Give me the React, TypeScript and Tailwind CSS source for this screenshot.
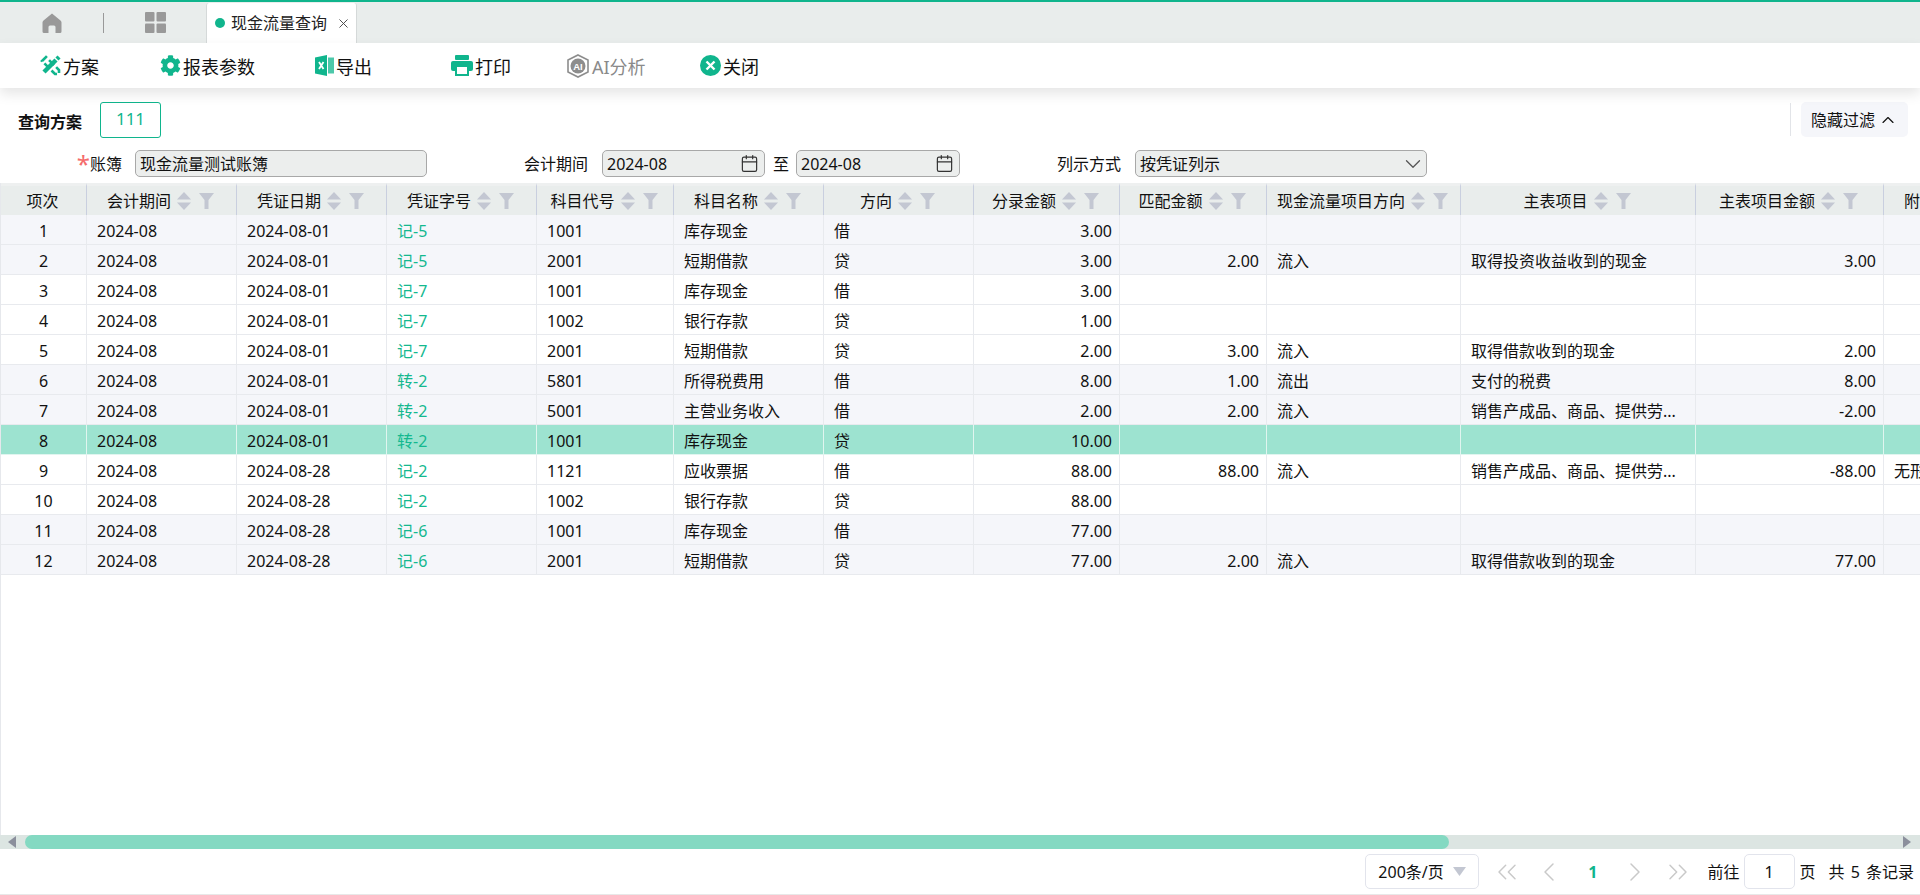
import { Calendar, ChevronDown, ChevronLeft, ChevronRight, ChevronUp, ChevronsLeft, ChevronsRight, X } from "lucide-react";
import { FaCog } from "react-icons/fa";

const columns = [
  { title: "项次", width: "w-[86px]", plain: true },
  { title: "会计期间", width: "w-[150px]" },
  { title: "凭证日期", width: "w-[150px]" },
  { title: "凭证字号", width: "w-[150px]" },
  { title: "科目代号", width: "w-[137px]" },
  { title: "科目名称", width: "w-[150px]" },
  { title: "方向", width: "w-[150px]" },
  { title: "分录金额", width: "w-[146px]" },
  { title: "匹配金额", width: "w-[147px]" },
  { title: "现金流量项目方向", width: "w-[194px]" },
  { title: "主表项目", width: "w-[235px]" },
  { title: "主表项目金额", width: "w-[188px]" },
  { title: "附表项目", width: "w-[150px]" },
];

const rows = [
  { no: 1, date: "2024-08-01", voucher: "记-5", code: "1001", name: "库存现金", dir: "借", amount: "3.00", match: "", flow: "", item: "", itemAmount: "", extra: "", shade: true },
  { no: 2, date: "2024-08-01", voucher: "记-5", code: "2001", name: "短期借款", dir: "贷", amount: "3.00", match: "2.00", flow: "流入", item: "取得投资收益收到的现金", itemAmount: "3.00", extra: "", shade: true },
  { no: 3, date: "2024-08-01", voucher: "记-7", code: "1001", name: "库存现金", dir: "借", amount: "3.00", match: "", flow: "", item: "", itemAmount: "", extra: "", shade: false },
  { no: 4, date: "2024-08-01", voucher: "记-7", code: "1002", name: "银行存款", dir: "贷", amount: "1.00", match: "", flow: "", item: "", itemAmount: "", extra: "", shade: false },
  { no: 5, date: "2024-08-01", voucher: "记-7", code: "2001", name: "短期借款", dir: "贷", amount: "2.00", match: "3.00", flow: "流入", item: "取得借款收到的现金", itemAmount: "2.00", extra: "", shade: false },
  { no: 6, date: "2024-08-01", voucher: "转-2", code: "5801", name: "所得税费用", dir: "借", amount: "8.00", match: "1.00", flow: "流出", item: "支付的税费", itemAmount: "8.00", extra: "", shade: true },
  { no: 7, date: "2024-08-01", voucher: "转-2", code: "5001", name: "主营业务收入", dir: "借", amount: "2.00", match: "2.00", flow: "流入", item: "销售产成品、商品、提供劳...", itemAmount: "-2.00", extra: "", shade: true },
  { no: 8, date: "2024-08-01", voucher: "转-2", code: "1001", name: "库存现金", dir: "贷", amount: "10.00", match: "", flow: "", item: "", itemAmount: "", extra: "", shade: true, active: true },
  { no: 9, date: "2024-08-28", voucher: "记-2", code: "1121", name: "应收票据", dir: "借", amount: "88.00", match: "88.00", flow: "流入", item: "销售产成品、商品、提供劳...", itemAmount: "-88.00", extra: "无形资产", shade: false },
  { no: 10, date: "2024-08-28", voucher: "记-2", code: "1002", name: "银行存款", dir: "贷", amount: "88.00", match: "", flow: "", item: "", itemAmount: "", extra: "", shade: false },
  { no: 11, date: "2024-08-28", voucher: "记-6", code: "1001", name: "库存现金", dir: "借", amount: "77.00", match: "", flow: "", item: "", itemAmount: "", extra: "", shade: true },
  { no: 12, date: "2024-08-28", voucher: "记-6", code: "2001", name: "短期借款", dir: "贷", amount: "77.00", match: "2.00", flow: "流入", item: "取得借款收到的现金", itemAmount: "77.00", extra: "", shade: true },
];

function HomeIcon() {
  return (
    <svg width="20" height="20" viewBox="0 0 20 20" fill="#999">
      <path d="M10 0.5 L18.5 7.5 Q19.5 8.3 19.5 9.5 V18.5 Q19.5 20 18 20 H13.5 V14 Q13.5 12.5 12 12.5 H8 Q6.5 12.5 6.5 14 V20 H2 Q0.5 20 0.5 18.5 V9.5 Q0.5 8.3 1.5 7.5 Z" />
    </svg>
  );
}

function GridIcon() {
  return (
    <svg width="21" height="21" viewBox="0 0 21 21" fill="#999">
      <rect x="0" y="0" width="9.5" height="9.5" rx="1" />
      <rect x="11.5" y="0" width="9.5" height="9.5" rx="1" />
      <rect x="0" y="11.5" width="9.5" height="9.5" rx="1" />
      <rect x="11.5" y="11.5" width="9.5" height="9.5" rx="1" />
    </svg>
  );
}

function PlanIcon() {
  return (
    <svg width="21" height="21" viewBox="0 0 21 21" fill="none" stroke="#10b58d">
      <path d="M2 6 L6 2 L19 15 L19 19 L15 19 Z" strokeWidth="2.6" strokeDasharray="7 3" />
      <path d="M4 17 L16 5" strokeWidth="4.5" />
      <path d="M16.5 1.5 L19.5 4.5" strokeWidth="3" />
    </svg>
  );
}

function ExcelIcon() {
  return (
    <svg width="19" height="21" viewBox="0 0 19 21">
      <path d="M0 2.5 L12 0 V21 L0 18.5 Z" fill="#10b58d" />
      <path d="M13 2.5 H19 V18.5 H13 Z" fill="#10b58d" opacity="0.75" />
      <path d="M4 7 L8.5 14 M8.5 7 L4 14" stroke="#fff" strokeWidth="1.8" />
    </svg>
  );
}

function PrintIcon() {
  return (
    <svg width="22" height="21" viewBox="0 0 22 21" fill="#10b58d">
      <rect x="4" y="0" width="14" height="5" rx="1" />
      <rect x="0" y="6" width="22" height="10" rx="2" />
      <rect x="5" y="11" width="12" height="9" fill="#fff" stroke="#10b58d" strokeWidth="2" />
    </svg>
  );
}

function AiIcon() {
  return (
    <svg width="24" height="24" viewBox="0 0 24 24" fill="none">
      <path d="M12 1 L22 6 V18 L12 23 L2 18 V6 Z" stroke="#8d8d8d" strokeWidth="1.6" />
      <circle cx="12" cy="12" r="7.5" fill="#8d8d8d" />
      <text x="12" y="15.5" textAnchor="middle" fontSize="9.5" fontWeight="700" fill="#fff" fontFamily="Liberation Sans, sans-serif">AI</text>
    </svg>
  );
}

function CloseIcon() {
  return (
    <svg width="21" height="21" viewBox="0 0 21 21">
      <circle cx="10.5" cy="10.5" r="10.5" fill="#10b58d" />
      <path d="M6.5 6.5 L14.5 14.5 M14.5 6.5 L6.5 14.5" stroke="#fff" strokeWidth="2.4" />
    </svg>
  );
}

function SortIcon() {
  return (
    <svg width="14" height="18" viewBox="0 0 14 18" fill="#c3c7d2">
      <path d="M7 0 L14 7.5 H0 Z" />
      <path d="M0 10.5 H14 L7 18 Z" />
    </svg>
  );
}

function FilterIcon() {
  return (
    <svg width="15" height="16" viewBox="0 0 15 16" fill="#c3c7d2">
      <path d="M0 0 H15 L9.5 7 V16 H5.5 V7 Z" />
    </svg>
  );
}

function ToolButton({ icon, label, width, muted }: { icon: React.ReactNode; label: string; width: string; muted?: boolean }) {
  return (
    <div className={`flex items-center gap-[2px] text-[18px] ${width} ${muted ? "text-[#8a8a8a]" : "text-[#111]"}`}>
      {icon}
      <span className="pt-[4px]">{label}</span>
    </div>
  );
}

function Field({ value, width, trailing }: { value: string; width: string; trailing?: React.ReactNode }) {
  return (
    <div className={`flex h-[27px] items-center justify-between rounded-[5px] border border-[#a8a8a8] bg-[#eceeed] pl-[4px] pr-[7px] text-[#111] ${width}`}>
      <span>{value}</span>
      {trailing}
    </div>
  );
}

export default function App() {
  return (
    <div className="flex h-[895px] w-full flex-col overflow-hidden bg-white text-[16px] text-[#111] [font-family:'Noto_Sans','Noto_Sans_CJK_SC',sans-serif]">
      {/* Tabs */}
      <div className="flex h-[43px] shrink-0 items-stretch border-t-2 border-[#10b58d] bg-[#e9edec]">
        <div className="flex w-[206px] items-center pl-[42px]">
          <HomeIcon />
          <div className="ml-[41px] h-[20px] w-px bg-[#999]" />
          <div className="ml-[41px]"><GridIcon /></div>
        </div>
        <div className="mt-px flex w-[151px] items-center rounded-t-[3px] border-x border-[#d5d9d9] bg-white pl-[8px]">
          <span className="h-[10px] w-[10px] rounded-full bg-[#10b58d]" />
          <span className="ml-[6px] text-[16px] text-[#222]">现金流量查询</span>
          <X className="ml-[9px] text-[#444]" size={15} strokeWidth={1.5} />
        </div>
      </div>

      {/* Toolbar */}
      <div className="relative z-10 flex h-[45px] shrink-0 items-center bg-white pl-[40px] shadow-[0_6px_12px_rgba(0,0,0,0.1)]">
        <ToolButton icon={<PlanIcon />} label="方案" width="w-[120px]" />
        <ToolButton icon={<FaCog className="text-[#10b58d]" size={21} />} label="报表参数" width="w-[155px]" />
        <ToolButton icon={<ExcelIcon />} label="导出" width="w-[136px]" />
        <ToolButton icon={<PrintIcon />} label="打印" width="w-[115px]" />
        <ToolButton icon={<AiIcon />} label="AI分析" width="w-[134px]" muted />
        <ToolButton icon={<CloseIcon />} label="关闭" width="w-[100px]" />
      </div>

      {/* Saved query */}
      <div className="mt-[14px] flex h-[35px] shrink-0 items-center pl-[18px] pr-[12px]">
        <span className="w-[82px] pt-[4px] font-bold">查询方案</span>
        <div className="flex h-[36px] w-[61px] items-center justify-center rounded-[3px] border border-[#10b58d] pb-[2px] text-[17px] text-[#10b58d]">111</div>
        <div className="ml-auto h-[33px] w-px bg-[#e2e4e8]" />
        <div className="ml-[10px] flex h-[35px] w-[107px] items-center justify-center gap-[3px] rounded-[5px] bg-[#f5f6fa]">
          隐藏过滤
          <ChevronUp size={20} strokeWidth={1.4} />
        </div>
      </div>

      {/* Filters */}
      <div className="mt-[13px] flex h-[27px] shrink-0 items-center">
        <div className="flex w-[135px] items-center justify-end pr-[13px]">
          <span className="h-[16px] text-[24px] leading-[16px] text-[#f56c6c]">*</span>
          <span>账簿</span>
        </div>
        <Field value="现金流量测试账簿" width="w-[292px]" />
        <span className="ml-[97px] w-[64px]">会计期间</span>
        <div className="ml-[14px]">
          <Field value="2024-08" width="w-[163px]" trailing={<Calendar size={19} strokeWidth={1.5} className="-mr-[2px] text-[#333]" />} />
        </div>
        <span className="ml-[8px]">至</span>
        <div className="ml-[7px]">
          <Field value="2024-08" width="w-[164px]" trailing={<Calendar size={19} strokeWidth={1.5} className="-mr-[2px] text-[#333]" />} />
        </div>
        <span className="ml-[97px] w-[64px]">列示方式</span>
        <div className="ml-[14px]">
          <Field value="按凭证列示" width="w-[292px]" trailing={<ChevronDown size={26} strokeWidth={1.2} className="-mr-[7px] text-[#555]" />} />
        </div>
      </div>

      {/* Table */}
      <div className="mt-[6px] min-h-0 flex-1 overflow-hidden border-l border-[#e6e8ec]">
        <table className="w-[2032px] table-fixed border-separate border-spacing-0">
          <colgroup>
            {columns.map((c) => <col key={c.title} className={c.width} />)}
          </colgroup>
          <thead>
            <tr>
              {columns.map((c) => (
                <th key={c.title} className="h-[32px] border-r border-t-[3px] border-r-[#c9cfdf] border-t-[#eef0f0] bg-[#e9edec] p-0 pr-[2px] text-[16px] font-normal">
                  <div className="flex items-center justify-center">
                    <span className="whitespace-nowrap">{c.title}</span>
                    {!c.plain && (
                      <>
                        <span className="ml-[6px]"><SortIcon /></span>
                        <span className="ml-[8px]"><FilterIcon /></span>
                      </>
                    )}
                  </div>
                </th>
              ))}
            </tr>
          </thead>
          <tbody>
            {rows.map((r) => {
              const rowBg = r.active ? "bg-[#9de3d0]" : r.shade ? "bg-[#f5f6fa]" : "bg-white";
              const cell = `h-[30px] border-b border-r p-0 pt-[2px] whitespace-nowrap overflow-hidden ${r.active ? "border-[#e0f5ef]" : "border-[#e8eaee]"} ${rowBg}`;
              return (
                <tr key={r.no}>
                  <td className={`${cell} text-center`}>{r.no}</td>
                  <td className={`${cell} pl-[10px]`}>2024-08</td>
                  <td className={`${cell} pl-[10px]`}>{r.date}</td>
                  <td className={`${cell} pl-[10px] text-[#14b88f]`}>{r.voucher}</td>
                  <td className={`${cell} pl-[10px]`}>{r.code}</td>
                  <td className={`${cell} pl-[10px]`}>{r.name}</td>
                  <td className={`${cell} pl-[10px]`}>{r.dir}</td>
                  <td className={`${cell} pr-[7px] text-right`}>{r.amount}</td>
                  <td className={`${cell} pr-[7px] text-right`}>{r.match}</td>
                  <td className={`${cell} pl-[10px]`}>{r.flow}</td>
                  <td className={`${cell} pl-[10px]`}>{r.item}</td>
                  <td className={`${cell} pr-[7px] text-right`}>{r.itemAmount}</td>
                  <td className={`${cell} pl-[10px]`}>{r.extra}</td>
                </tr>
              );
            })}
          </tbody>
        </table>
      </div>

      {/* Horizontal scrollbar */}
      <div className="flex h-[14px] shrink-0 items-center bg-[#dce5e2] pl-[8px] pr-[9px]">
        <svg width="8" height="12" viewBox="0 0 8 12" fill="#8b8f9c"><path d="M8 0 V12 L0 6 Z" /></svg>
        <div className="ml-[9px] h-[14px] w-[1424px] rounded-[7px] bg-[#84d9c2]" />
        <svg className="ml-auto" width="8" height="12" viewBox="0 0 8 12" fill="#8b8f9c"><path d="M0 0 V12 L8 6 Z" /></svg>
      </div>

      {/* Pagination */}
      <div className="flex h-[46px] shrink-0 items-center justify-end border-b border-[#e8e8e8] pr-[6px]">
        <div className="flex h-[35px] w-[114px] items-center rounded-[5px] border border-[#e2e4ec] pl-[12px]">
          <span>200条/页</span>
          <svg className="ml-[9px]" width="13" height="9" viewBox="0 0 13 9" fill="#c3c7d2"><path d="M0 0 H13 L6.5 9 Z" /></svg>
        </div>
        <ChevronsLeft className="ml-[12px] text-[#c9c9c9]" size={32} strokeWidth={1.1} />
        <ChevronLeft className="ml-[10px] text-[#c9c9c9]" size={32} strokeWidth={1.1} />
        <span className="ml-[23px] font-bold text-[#10b58d]">1</span>
        <ChevronRight className="ml-[22px] text-[#c9c9c9]" size={32} strokeWidth={1.1} />
        <ChevronsRight className="ml-[11px] text-[#c9c9c9]" size={32} strokeWidth={1.1} />
        <span className="ml-[13px]">前往</span>
        <div className="ml-[4px] flex h-[35px] w-[51px] items-center justify-center rounded-[5px] border border-[#e2e4ec]">1</div>
        <span className="ml-[5px]">页</span>
        <span className="ml-[13px] [word-spacing:2px]">共 5 条记录</span>
      </div>
    </div>
  );
}
